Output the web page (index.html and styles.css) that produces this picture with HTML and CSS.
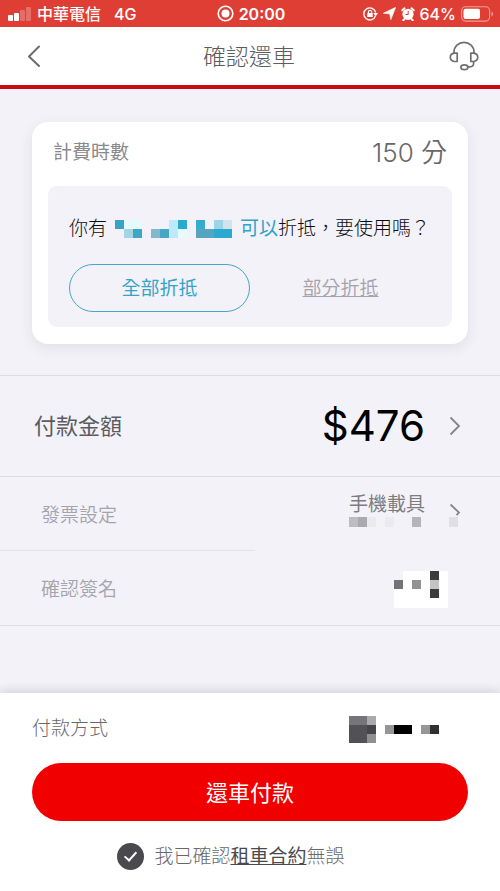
FILE: index.html
```html
<!DOCTYPE html>
<html lang="zh-Hant">
<head>
<meta charset="utf-8">
<meta name="viewport" content="width=device-width, initial-scale=1">
<title>確認還車</title>
<link rel="stylesheet" href="styles.css">
</head>
<body>
<div class="status">
  <div class="status-side">
    <svg width="24" height="14" viewBox="0 0 24 14" fill="#fff" aria-hidden="true">
      <rect x="0" y="8" width="5" height="6" rx="1"/>
      <rect x="6" y="6" width="5" height="8" rx="1"/>
      <rect x="12" y="3" width="5" height="11" rx="1" opacity=".25"/>
      <rect x="18" y="0" width="5" height="14" rx="1" opacity=".25"/>
    </svg>
    <span class="carrier">中華電信</span>
    <span class="network">4G</span>
  </div>
  <div class="status-time">
    <svg width="17" height="17" viewBox="0 0 17 17" aria-hidden="true">
      <circle cx="8.500" cy="8.500" r="7.300" fill="none" stroke="#fff" stroke-width="1.600"/>
      <circle cx="8.500" cy="8.500" r="4" fill="#fff"/>
    </svg>
    <span>20:00</span>
  </div>
  <div class="status-side status-right">
    <svg width="15" height="14" viewBox="0 0 15 14" aria-hidden="true">
      <path d="M12.600 8.600A6 6 0 1 1 12.700 5.600" fill="none" stroke="#fff" stroke-width="1.400"/>
      <path d="M10.200 6h4.800l-2.400 3.400z" fill="#fff"/>
      <rect x="4.300" y="6" width="5.400" height="4" rx=".6" fill="#fff"/>
      <path d="M5.400 6.200V5a1.600 1.600 0 0 1 3.200 0v1.200" fill="none" stroke="#fff" stroke-width="1.100"/>
    </svg>
    <svg width="13" height="13" viewBox="0 0 13 13" aria-hidden="true">
      <path d="M12.700.3 7.800 12.700 6.700 6.800.3 6.300z" fill="#fff" stroke="#fff" stroke-width=".6" stroke-linejoin="round"/>
    </svg>
    <svg width="14" height="14" viewBox="0 0 14 14" aria-hidden="true">
      <circle cx="7" cy="7.300" r="5.600" fill="#fff"/>
      <path d="M1.300 3.300 3.500 1.300M12.700 3.300 10.500 1.300M2.300 13.200l1.800-1.800M11.700 13.200l-1.800-1.800" stroke="#fff" stroke-width="2" stroke-linecap="round"/>
      <path d="M7.200 3.800v3.700H4.600" fill="none" stroke="#df3e35" stroke-width="1"/>
    </svg>
    <span class="percent">64%</span>
    <svg width="33" height="16" viewBox="0 0 33 16" aria-hidden="true">
      <rect x=".6" y=".7" width="28" height="14.400" rx="4" fill="none" stroke="#fff" stroke-opacity=".5" stroke-width="1.100"/>
      <rect x="2.500" y="2.700" width="16.500" height="10.400" rx="2" fill="#fff"/>
      <path d="M30.500 5.500c2 .8 2 4.200 0 5z" fill="#fff" opacity=".5"/>
    </svg>
  </div>
</div>

<header class="topbar">
  <button class="icon-button" type="button" aria-label="返回">
    <svg width="14" height="24" viewBox="0 0 14 24" fill="none" stroke="#6b6b6d" stroke-width="2" stroke-linecap="round" stroke-linejoin="round"><path d="M12 2.500 2 12.500l10 9.500"/></svg>
  </button>
  <h1>確認還車</h1>
  <button class="icon-button" type="button" aria-label="客服">
    <svg width="30" height="30" viewBox="0 0 30 30" fill="none" stroke="#707072" stroke-width="1.700" stroke-linejoin="round">
      <path d="M5 12.200V11a10 9.700 0 0 1 20 0v1.200"/>
      <path d="M8.200 12.200H5.400Q1.300 12.800 1.300 16.300t4.100 4.200h2.800z"/>
      <path d="M21.800 12.200h2.800q4.100.6 4.100 4.100t-4.100 4.200h-2.800z"/>
      <path d="M24.600 20.500v1.800q0 3.500-3.600 3.500h-2.200"/>
      <ellipse cx="15.400" cy="26.300" rx="3.500" ry="2.400"/>
    </svg>
  </button>
</header>

<main>
  <section class="card">
    <div class="card-head">
      <span class="card-label">計費時數</span>
      <span class="duration">150 分</span>
    </div>
    <div class="offer">
      <p class="offer-text">
        <span>你有</span>
        <svg width="117" height="18" viewBox="0 0 117 18" shape-rendering="crispEdges" aria-hidden="true">
          <path fill="#e6fafb" d="M9 0h18v9H9z"/>
          <path fill="#39a3c5" d="M0 0h9v9H0z"/><path fill="#a5d5e5" d="M9 9h9v9H9z"/><path fill="#3da6c5" d="M18 9h9v9h-9z"/>
          <path fill="#82b9cc" d="M36 9h9v9h-9z"/><path fill="#47a8c6" d="M45 9h9v9h-9z"/><path fill="#bdeafa" d="M54 0h9v18h-9z"/><path fill="#28abcd" d="M63 0h9v9h-9z"/><path fill="#e6fbfc" d="M63 9h9v9h-9z"/>
          <path fill="#37aacd" d="M81 0h9v9h-9z"/><path fill="#55a4c0" d="M81 9h18v9H81z"/><path fill="#29a9cf" d="M99 9h18v9H99z"/><path fill="#9bd5e7" d="M99 0h9v9h-9z"/><path fill="#d3e3ed" d="M108 0h9v9h-9z"/>
        </svg>
        <span><em>可以</em>折抵，要使用嗎？</span>
      </p>
      <div class="choices">
        <button class="choice choice-all" type="button">全部折抵</button>
        <button class="choice choice-part" type="button">部分折抵</button>
      </div>
    </div>
  </section>

  <section class="rows">
    <div class="row row-amount">
      <span class="row-label">付款金額</span>
      <span class="amount">$476</span>
      <svg class="chevron" width="12" height="20" viewBox="0 0 12 20" fill="none" stroke="#858588" stroke-width="1.800"><path d="M1.500 1.500 10 10l-8.500 8.500"/></svg>
    </div>
    <div class="row row-invoice">
      <span class="row-label">發票設定</span>
      <span class="carrier-value">
        <span>手機載具</span>
        <svg width="76" height="10" viewBox="0 0 76 10" shape-rendering="crispEdges" aria-hidden="true">
          <path fill="#bdbcc1" d="M0 0h9v10H0z"/><path fill="#aaa9ae" d="M9 0h9v10H9z"/><path fill="#ebebee" d="M18 0h9v10h-9zM36 0h9v10h-9z"/><path fill="#b5b4b9" d="M63 0h9v10h-9z"/>
        </svg>
      </span>
      <svg class="chevron" width="12" height="34" viewBox="0 0 12 34" aria-hidden="true">
        <path d="M1.500 11.500 10 19.500l-2.500 2.700" fill="none" stroke="#858588" stroke-width="1.800"/><path fill="#e0dfe4" d="M0 24h9v10H0z"/>
      </svg>
    </div>
    <div class="row row-sign">
      <span class="row-label">確認簽名</span>
      <svg width="54" height="37" viewBox="0 0 54 37" shape-rendering="crispEdges" role="img" aria-label="簽名">
        <path fill="#fff" d="M9 0h45v37H0V9h9z"/>
        <path fill="#747476" d="M0 9h9v9H0z"/><path fill="#929294" d="M18 9h9v9h-9z"/><path fill="#3b3b3d" d="M36 0h9v9h-9zM36 18h9v9h-9z"/><path fill="#c3c3c4" d="M36 9h9v9h-9z"/>
      </svg>
    </div>
  </section>
</main>

<footer class="checkout">
  <div class="method">
    <span>付款方式</span>
    <svg width="90" height="27" viewBox="0 0 90 27" shape-rendering="crispEdges" aria-hidden="true">
      <path fill="#76767a" d="M0 0h18v9H0z"/><path fill="#aaaaac" d="M18 0h9v9h-9z"/><path fill="#515156" d="M0 9h18v18H0z"/><path fill="#45454a" d="M18 9h9v9h-9z"/><path fill="#909092" d="M18 18h9v9h-9z"/>
      <path fill="#969698" d="M36 9h9v9h-9zM72 9h9v9h-9z"/><path fill="#000" d="M45 9h18v9H45z"/><path fill="#303032" d="M81 9h9v9h-9z"/>
    </svg>
  </div>
  <button class="pay" type="button">還車付款</button>
  <div class="agree">
    <input id="agree" type="checkbox" checked>
    <label for="agree">我已確認<a href="#contract">租車合約</a>無誤</label>
  </div>
</footer>
</body>
</html>
```
FILE: styles.css
```css
* {
  box-sizing: border-box;
}

body {
  margin: 0;
  min-height: 100vh;
  display: flex;
  flex-direction: column;
  background: #f3f2f8;
  color: #68686b;
  font-family: Inter, "Noto Sans CJK TC", sans-serif;
  font-size: 19px;
  font-weight: 300;
  line-height: 28px;
}

button {
  margin: 0;
  padding: 0;
  border: 0;
  background: none;
  color: inherit;
  font: inherit;
  cursor: pointer;
}

svg {
  display: block;
  flex: none;
}

/* Status bar */
.status {
  display: grid;
  grid-template-columns: 1fr auto 1fr;
  align-items: center;
  height: 27px;
  padding: 0 6px 0 8px;
  background: #df3e35;
  color: #fff;
  font-size: 16px;
  font-weight: 500;
  line-height: 26px;
}

.status-side,
.status-time {
  display: flex;
  align-items: center;
}

.status-side {
  gap: 5px;
}

.status-right {
  justify-content: flex-end;
}

.network {
  margin-left: 8px;
}

.status-time {
  gap: 5px;
  font-weight: 600;
}

/* Title bar */
.topbar {
  display: flex;
  align-items: center;
  justify-content: space-between;
  height: 62px;
  padding: 0 20px 0 18px;
  border-bottom: 4px solid #c90b10;
  background: #fff;
}

.icon-button {
  display: flex;
  align-items: center;
  justify-content: center;
  width: 32px;
  height: 40px;
}

h1 {
  margin: 0;
  padding-top: 2px;
  color: #5c5c5e;
  font-size: 23px;
  font-weight: 300;
}

main {
  flex: 1;
}

/* Billing card */
.card {
  margin: 33px 32px 0;
  padding: 0 16px 17px;
  border-radius: 16px;
  background: #fff;
  box-shadow: 0 4px 14px rgba(40, 40, 70, 0.09);
}

.card-head {
  display: flex;
  align-items: center;
  justify-content: space-between;
  height: 64px;
  padding: 0 5px 2px;
  font-weight: 400;
}

.card-label {
  color: #8a8a8d;
}

.duration {
  color: #68686a;
  font-size: 26px;
  font-weight: 350;
}

.offer {
  padding: 29px 21px 15px;
  border-radius: 9px;
  background: #f3f2f8;
}

.offer-text {
  display: flex;
  align-items: center;
  gap: 8px;
  margin: 0 0 21px;
  color: #0c0c0e;
  white-space: nowrap;
}

.offer-text em {
  color: #2ea3cb;
  font-style: normal;
  font-weight: 400;
}

.choices {
  display: grid;
  grid-template-columns: 1fr 1fr;
}

.choice {
  height: 48px;
  padding-top: 2px;
  border-radius: 24px;
}

.choice-all {
  border: 1px solid #45a5ca;
  color: #36a3c8;
  font-weight: 400;
}

.choice-part {
  color: #a4a2ac;
  font-weight: 350;
  text-decoration: underline;
}

/* Detail rows */
.rows {
  margin-top: 31px;
  border-top: 1px solid #dddce2;
}

.row {
  display: flex;
  align-items: center;
  padding: 3px 39px 0 41px;
}

.row-label {
  margin-right: auto;
  color: #a5a4ad;
  font-weight: 350;
}

.chevron {
  margin-left: 24px;
}

.row-amount {
  height: 101px;
  padding-top: 0;
  padding-left: 34px;
  border-bottom: 1px solid #dddce2;
}

.row-amount .row-label {
  color: #5c5c60;
  font-size: 22px;
  font-weight: 400;
}

.amount {
  color: #000;
  font-size: 42px;
  font-weight: 400;
  line-height: 48px;
}

.row-invoice {
  height: 74px;
  background: linear-gradient(#e4e3e9, #e4e3e9) left bottom / 51% 1px no-repeat;
}

.row-invoice .chevron {
  margin-bottom: 12px;
}

.carrier-value {
  display: grid;
  margin-bottom: 12px;
  color: #7d7d80;
  font-weight: 400;
  line-height: 24px;
}

.row-sign {
  height: 75px;
  padding-right: 52px;
  border-bottom: 1px solid #dddce2;
}

/* Checkout panel */
.checkout {
  padding: 22px 32px 20px;
  background: #fff;
  box-shadow: 0 -2px 10px rgba(40, 40, 60, 0.16);
}

.method {
  display: flex;
  align-items: center;
  justify-content: space-between;
  padding-right: 29px;
}

.pay {
  display: block;
  width: 100%;
  height: 58px;
  margin: 20px 0;
  padding-top: 2px;
  border-radius: 29px;
  background: #f10000;
  color: #fff;
  font-size: 22px;
  font-weight: 400;
}

.agree {
  display: flex;
  align-items: center;
  justify-content: center;
  gap: 10px;
  padding-right: 38px;
}

.agree input {
  display: grid;
  place-items: center;
  width: 27px;
  height: 27px;
  margin: 0;
  border-radius: 50%;
  background: #c8c8cc;
  appearance: none;
}

.agree input:checked {
  background: #4a4a4e;
}

.agree input:checked::after {
  content: "";
  width: 5px;
  height: 10px;
  margin-bottom: 3px;
  border: solid #fff;
  border-width: 0 2px 2px 0;
  transform: rotate(42deg);
}

.agree label {
  padding-top: 2px;
}

.agree a {
  color: #4a4a4d;
  font-weight: 400;
}
```
